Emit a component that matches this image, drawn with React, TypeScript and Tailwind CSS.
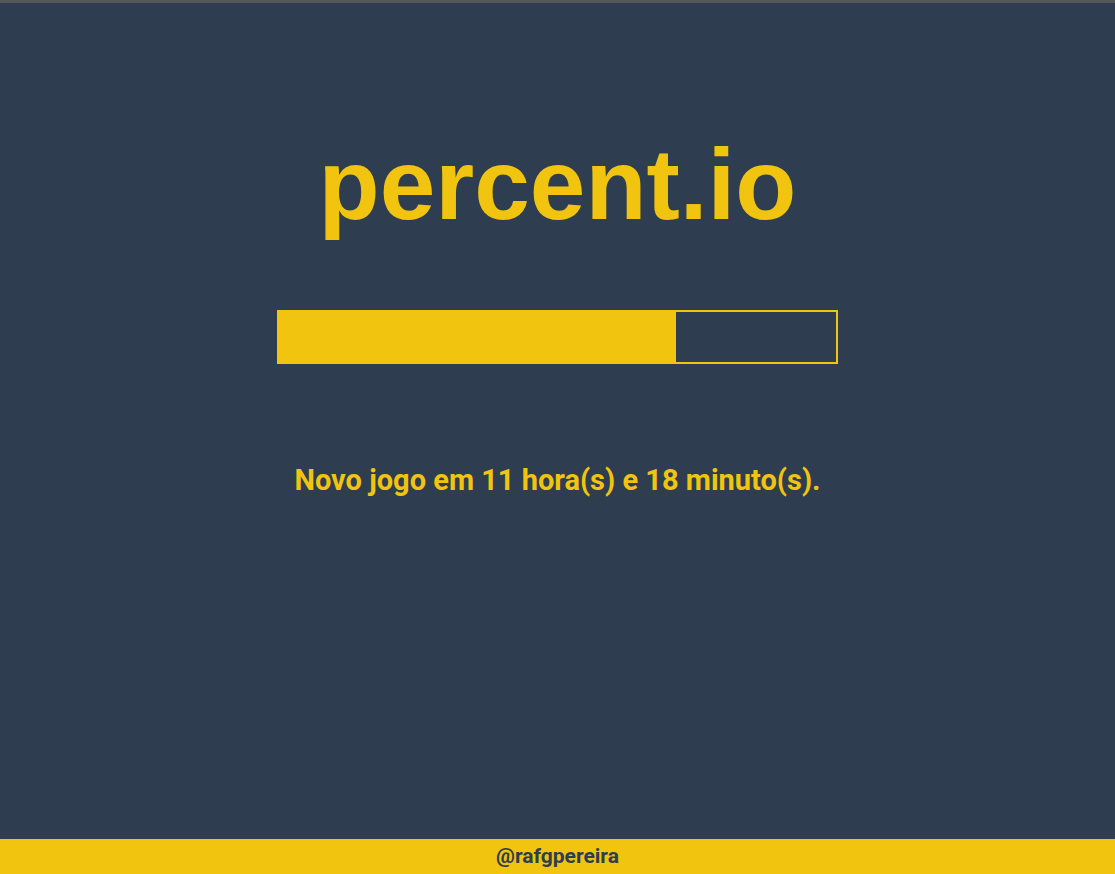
import React from "react";

export default function App() {
  const pct = 71.3;
  return (
    <div className="flex h-[874px] w-full flex-col bg-[#2e3e50] border-t-[3px] border-[#555658]">
      <main className="flex flex-1 flex-col items-center">
        <h1 className="mt-[121px] text-[100px] font-bold leading-[120px] text-[#f1c40f] [font-family:'Liberation_Sans',Arial,sans-serif]">
          percent.io
        </h1>
        <div className="mt-[66px] h-[54px] w-[561px] border-2 border-[#f1c40f]">
          <div className="h-full bg-[#f1c40f]" style={{ width: `${pct}%` }} />
        </div>
        <p className="mt-[98px] text-[29px] font-bold leading-[36px] text-[#f1c40f] [font-family:Roboto,'Liberation_Sans',sans-serif]">
          Novo jogo em 11 hora(s) e 18 minuto(s).
        </p>
      </main>
      <footer className="flex h-[35px] items-center justify-center bg-[#f1c40f] text-[21px] font-bold text-[#2e3e50] [font-family:Roboto,'Liberation_Sans',sans-serif]">
        @rafgpereira
      </footer>
    </div>
  );
}
